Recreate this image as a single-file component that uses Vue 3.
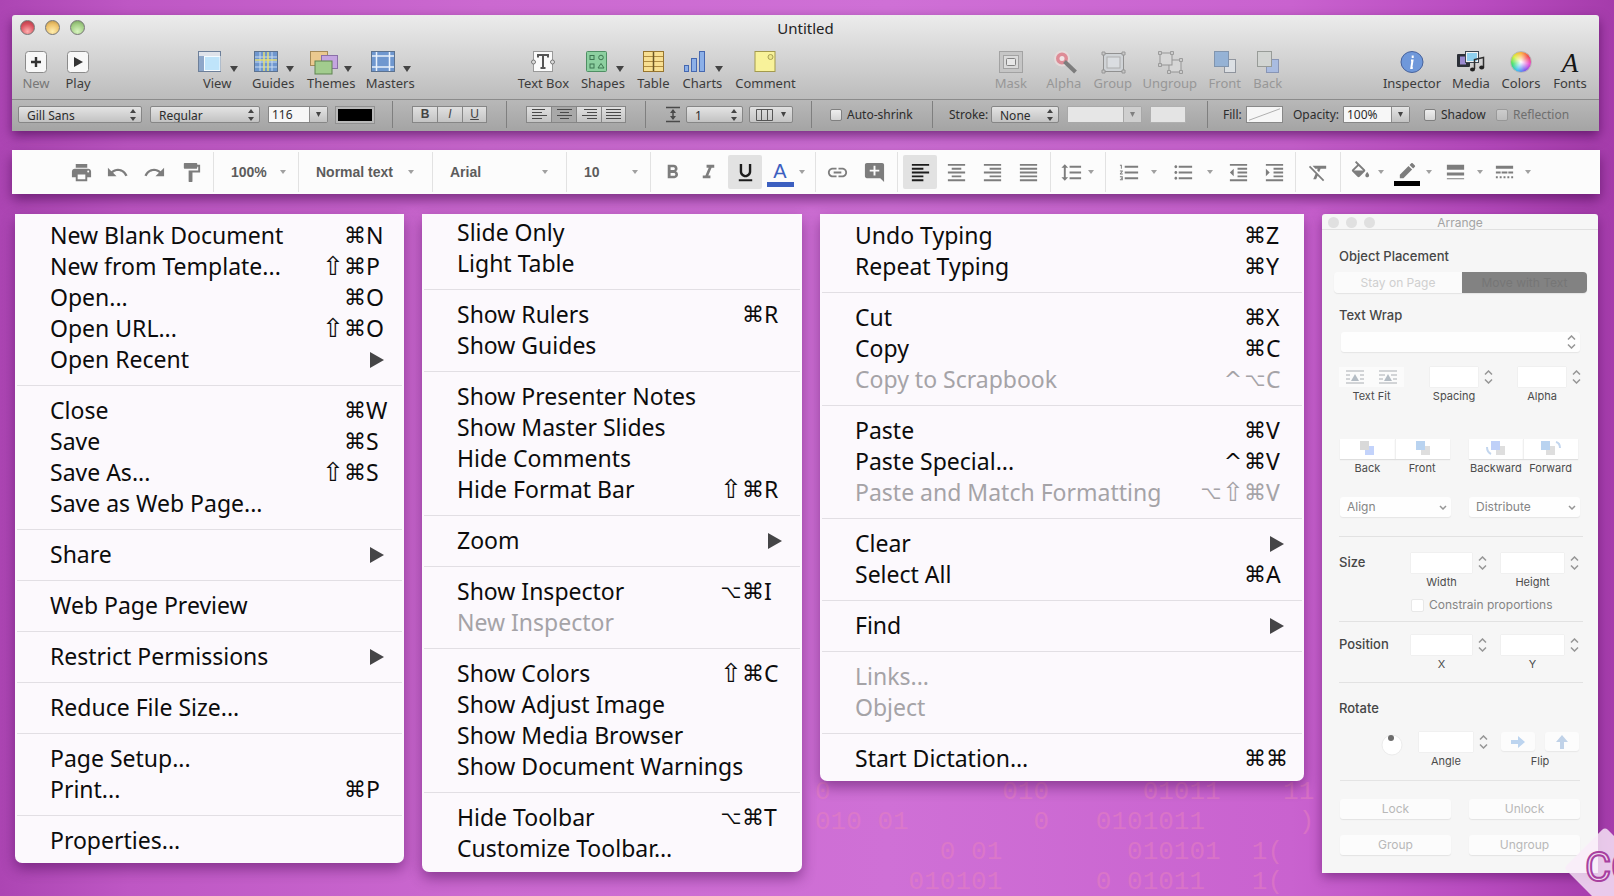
<script setup>
const toolGroups = [
  { cls: 'g-a', items: [
    { label: 'New', icon: 'plus', faded: true },
    { label: 'Play', icon: 'play' },
  ] },
  { cls: 'g-b', items: [
    { label: 'View', icon: 'view', caret: true },
    { label: 'Guides', icon: 'guides', caret: true },
    { label: 'Themes', icon: 'themes', caret: true },
    { label: 'Masters', icon: 'masters', caret: true },
  ] },
  { cls: 'g-c', items: [
    { label: 'Text Box', icon: 'textbox' },
    { label: 'Shapes', icon: 'shapes', caret: true },
    { label: 'Table', icon: 'table' },
    { label: 'Charts', icon: 'charts', caret: true },
    { label: 'Comment', icon: 'note' },
  ] },
  { cls: 'g-d', items: [
    { label: 'Mask', icon: 'mask', off: true },
    { label: 'Alpha', icon: 'alpha', off: true },
    { label: 'Group', icon: 'group', off: true },
    { label: 'Ungroup', icon: 'ungroup', off: true },
    { label: 'Front', icon: 'front', off: true },
    { label: 'Back', icon: 'back', off: true },
  ] },
  { cls: 'g-e', items: [
    { label: 'Inspector', icon: 'inspector' },
    { label: 'Media', icon: 'media' },
    { label: 'Colors', icon: 'colors' },
    { label: 'Fonts', icon: 'fonts' },
  ] },
]

const big = {
  plus: '<rect x="3.500" y="1.500" width="21" height="21" rx="3" fill="#f8f8f8" stroke="#8b8b8b"/><path d="M9 12h10M14 7v10" stroke="#333" stroke-width="2.400"/>',
  play: '<rect x="3.500" y="1.500" width="21" height="21" rx="3" fill="#f8f8f8" stroke="#8b8b8b"/><path d="M10 7l9 5-9 5z" fill="#333"/>',
  view: '<rect x="2.500" y="1.500" width="22" height="20" fill="#9fb6d4" stroke="#6d7f99"/><rect x="3" y="2" width="21" height="4" fill="#dfe3ea"/><rect x="3" y="6" width="5" height="15" fill="#8ea7c9"/><rect x="8.500" y="6.500" width="15.500" height="14" fill="#bfe4fa" stroke="#f4fbff"/>',
  guides: '<rect x="2.500" y="1.500" width="23" height="20" fill="#6f97cf" stroke="#5c728f"/><path d="M3 7h22M3 12h22M3 17h22M8 2v19M20 2v19" stroke="#c9dcf2"/><path d="M12 2v19M16 2v19M3 10h22" stroke="#e6e07a" stroke-width="1.500"/>',
  themes: '<rect x=".5" y="1.500" width="17" height="14" fill="#ebc98f" stroke="#a58a58"/><rect x="11.500" y="5.500" width="16" height="13" fill="#c4a5e0" stroke="#8a70a8"/><rect x="5" y="11" width="17" height="13" fill="#a2cc8e" stroke="#5e8350"/>',
  masters: '<rect x="2.500" y="1.500" width="23" height="20" fill="#6f97cf" stroke="#5c728f"/><path d="M7.500 2v19M20.500 2v19M3 6h22M3 17h22" stroke="#eaf2fc" stroke-width="1.500"/>',
  textbox: '<rect x="4.500" y="1.500" width="19" height="20" fill="#fafafa" stroke="#999"/><circle cx="4.500" cy="12" r="2" fill="#ddd" stroke="#777"/><circle cx="23.500" cy="12" r="2" fill="#ddd" stroke="#777"/><path d="M9 7.500V5h10v2.500M14 5v13M11.500 18h5" fill="none" stroke="#555" stroke-width="2"/>',
  shapes: '<rect x="4.500" y="1.500" width="20" height="20" rx="1" fill="#8dd0a0" stroke="#4f8f64"/><rect x="8" y="5.500" width="4" height="4" fill="none" stroke="#3d7550"/><circle cx="19" cy="7.500" r="2.300" fill="none" stroke="#3d7550"/><rect x="8" y="14" width="4" height="4" fill="none" stroke="#3d7550"/><path d="M16 18l3-4.500 3 4.500z" fill="none" stroke="#3d7550"/>',
  table: '<rect x="4.500" y="1.500" width="20" height="20" fill="#f8df92" stroke="#97752f"/><path d="M5 6.500h19M5 11.500h19M5 16.500h19" stroke="#b08c42"/><path d="M14.500 2v19" stroke="#6b5526" stroke-width="1.500"/>',
  charts: '<rect x="3.500" y="15.500" width="4" height="6" fill="#8cb0e8" stroke="#4668b0"/><rect x="10.500" y="8.500" width="5" height="13" fill="#8cb0e8" stroke="#4668b0"/><rect x="18.500" y="1.500" width="5" height="20" fill="#8cb0e8" stroke="#4668b0"/>',
  note: '<rect x="4" y="1.500" width="20" height="20" fill="#f8f29a" stroke="#a39a4d"/><circle cx="19.500" cy="7" r="2.500" fill="#eee88a" stroke="#a8a054"/>',
  mask: '<rect x="2.500" y="1.500" width="23" height="21" fill="#c4c4c4" stroke="#9b9b9b"/><rect x="6.500" y="5.500" width="15" height="13" fill="#ddd" stroke="#9b9b9b"/><rect x="9.500" y="8.500" width="9" height="7" rx="1" fill="#ececec" stroke="#757575"/>',
  alpha: '<circle cx="12" cy="8.500" r="7" fill="#e07f8c" stroke="#e8dcdc" stroke-width="2"/><circle cx="12" cy="8.500" r="2.500" fill="#f7e6e8"/><path d="M14.500 11.500l11 10.500" stroke="#6f6f6f" stroke-width="4"/>',
  group: '<rect x="4.500" y="3.500" width="20" height="18" fill="#d0d4d8" stroke="#868686"/><rect x="8" y="7" width="13" height="11" fill="#dce0e4" stroke="#a8a8a8"/><path d="M3 2h3v3H3zM23 2h3v3h-3zM3 20h3v3H3zM23 20h3v3h-3z" fill="#c8c8c8" stroke="#8e8e8e"/>',
  ungroup: '<rect x="13" y="10" width="12" height="12" fill="#d8d8d8" stroke="#8b8b8b"/><rect x="4" y="3" width="12" height="12" fill="#d8d8d8" stroke="#8b8b8b"/><path d="M2.500 1.500h3v3h-3zM14.500 1.500h3v3h-3zM2.500 13.500h3v3h-3zM23.500 8.500h3v3h-3zM11.500 20.500h3v3h-3zM23.500 20.500h3v3h-3z" fill="#ccc" stroke="#939393"/>',
  front: '<rect x="13.500" y="9.500" width="11" height="13" fill="#dfe3e8" stroke="#858b95"/><rect x="3.500" y="1.500" width="14" height="15" fill="#8badd6" stroke="#738aa8"/>',
  back: '<rect x="12.500" y="9.500" width="12" height="13" fill="#a3b9e4" stroke="#7d8cb2"/><rect x="3.500" y="1.500" width="14" height="15" fill="#d2d5d2" stroke="#8e928e"/>',
  inspector: '<ellipse cx="14" cy="12" rx="11" ry="10.500" fill="#6f98da" stroke="#48639c"/><path d="M14.700 5.500v2.500M13 10.500h1.500l-1.200 7.500h1.500" fill="none" stroke="#fff" stroke-width="2"/>',
  media: '<rect x="0" y="4" width="13" height="13" rx="1" fill="#2c3038"/><rect x="3" y="6.500" width="6" height="8" fill="#9a8ad0"/><rect x="8.500" y="1.500" width="13" height="11" fill="#8fd0ee" stroke="#3c4650"/><rect x="9.500" y="2.500" width="11" height="9" fill="none" stroke="#f2f2f2"/><path d="M17.500 19V9.500l9-2V17" fill="none" stroke="#303030" stroke-width="1.500"/><ellipse cx="15.500" cy="19.500" rx="2.500" ry="2" fill="#222"/><ellipse cx="24.700" cy="17.500" rx="2.500" ry="2" fill="#222"/>',
  fonts: '<text x="14" y="22" text-anchor="middle" font-family="Liberation Serif, serif" font-style="italic" font-size="27" fill="#161616">A</text>',
}

const mat = {
  print: 'M19 8H5c-1.660 0-3 1.340-3 3v6h4v4h12v-4h4v-6c0-1.660-1.340-3-3-3zm-3 11H8v-5h8v5zm3-7c-.55 0-1-.45-1-1s.45-1 1-1 1 .45 1 1-.45 1-1 1zm-1-9H6v4h12V3z',
  undo: 'M12.500 8c-2.650 0-5.050.99-6.900 2.600L2 7v9h9l-3.620-3.620c1.390-1.160 3.160-1.880 5.120-1.880 3.540 0 6.550 2.310 7.600 5.500l2.370-.78C21.080 11.030 17.150 8 12.500 8z',
  redo: 'M18.400 10.600C16.550 8.990 14.150 8 11.500 8c-4.650 0-8.580 3.030-9.960 7.220L3.900 16c1.050-3.190 4.050-5.500 7.600-5.500 1.950 0 3.730.72 5.120 1.880L13 16h9V7l-3.600 3.600z',
  paint: 'M18 4V3c0-.55-.45-1-1-1H5c-.55 0-1 .45-1 1v4c0 .55.45 1 1 1h12c.55 0 1-.45 1-1V6h1v4H9v11c0 .55.45 1 1 1h2c.55 0 1-.45 1-1v-9h8V4h-3z',
  bold: 'M15.600 10.790c.97-.67 1.650-1.770 1.650-2.790 0-2.260-1.750-4-4-4H7v14h7.040c2.090 0 3.710-1.700 3.710-3.790 0-1.520-.86-2.820-2.150-3.420zM10 6.500h3c.83 0 1.500.67 1.500 1.500s-.67 1.500-1.500 1.500h-3v-3zm3.500 9H10v-3h3.500c.83 0 1.500.67 1.500 1.500s-.67 1.500-1.500 1.500z',
  italic: 'M10 4v3h2.210l-3.420 8H6v3h8v-3h-2.210l3.420-8H18V4z',
  underline: 'M12 17c3.310 0 6-2.690 6-6V3h-2.500v8c0 1.930-1.570 3.500-3.500 3.500S8.500 12.930 8.500 11V3H6v8c0 3.310 2.690 6 6 6zm-7 2v2h14v-2H5z',
  link: 'M3.900 12c0-1.710 1.390-3.100 3.100-3.100h4V7H7c-2.760 0-5 2.240-5 5s2.240 5 5 5h4v-1.900H7c-1.710 0-3.100-1.390-3.100-3.100zM8 13h8v-2H8v2zm9-6h-4v1.900h4c1.710 0 3.100 1.390 3.100 3.100s-1.390 3.100-3.100 3.100h-4V17h4c2.760 0 5-2.240 5-5s-2.240-5-5-5z',
  comment: 'M21.990 4c0-1.100-.89-2-1.990-2H4c-1.100 0-2 .9-2 2v12c0 1.100.9 2 2 2h14l4 4-.01-18zM17 11h-4v4h-2v-4H7V9h4V5h2v4h4v2z',
  left: 'M15 15H3v2h12v-2zm0-8H3v2h12V7zM3 13h18v-2H3v2zm0 8h12v-2H3v2zM3 3v2h18V3H3z',
  center: 'M7 15v2h10v-2H7zm-4 6h18v-2H3v2zm0-8h18v-2H3v2zm4-6v2h10V7H7zM3 3v2h18V3H3z',
  right: 'M3 21h18v-2H3v2zm6-4h12v-2H9v2zm-6-4h18v-2H3v2zm6-4h12V7H9v2zM3 3v2h18V3H3z',
  justify: 'M3 21h18v-2H3v2zm0-4h18v-2H3v2zm0-4h18v-2H3v2zm0-4h18V7H3v2zm0-6v2h18V3H3z',
  spacing: 'M6 7h2.500L5 3.500 1.500 7H4v10H1.500L5 20.500 8.500 17H6V7zm4-2v2h12V5H10zm0 14h12v-2H10v2zm0-6h12v-2H10v2z',
  numbers: 'M2 17h2v.5H3v1h1v.5H2v1h3v-4H2v1zm1-9h1V4H2v1h1v3zm-1 3h1.800L2 13.100v.9h3v-1H3.200L5 10.900V10H2v1zm5-6v2h14V5H7zm0 14h14v-2H7v2zm0-6h14v-2H7v2z',
  bullets: 'M4 10.500c-.83 0-1.500.67-1.500 1.500s.67 1.500 1.500 1.500 1.500-.67 1.500-1.500-.67-1.500-1.500-1.500zm0-6c-.83 0-1.500.67-1.500 1.500S3.170 7.500 4 7.500 5.500 6.830 5.500 6 4.830 4.500 4 4.500zm0 12c-.83 0-1.500.68-1.500 1.500s.68 1.500 1.500 1.500 1.500-.68 1.500-1.500-.67-1.500-1.500-1.500zM7 19h14v-2H7v2zm0-6h14v-2H7v2zm0-8v2h14V5H7z',
  outdent: 'M11 17h10v-2H11v2zm-8-5l4 4V8l-4 4zm0 9h18v-2H3v2zM3 3v2h18V3H3zm8 6h10V7H11v2zm0 4h10v-2H11v2z',
  indent: 'M3 21h18v-2H3v2zM3 8v8l4-4-4-4zm8 9h10v-2H11v2zM3 3v2h18V3H3zm8 6h10V7H11v2zm0 4h10v-2H11v2z',
  clear: 'M3.270 5L2 6.270l6.970 6.970L6.500 19h3l1.570-3.660L16.730 21 18 19.730 3.550 5.270 3.270 5zM6 5v.18L8.820 8h2.400l-.72 1.680 2.100 2.100L14.210 8H20V5H6z',
  fill: 'M16.560 8.940L7.620 0 6.210 1.410l2.380 2.380-5.150 5.150c-.59.59-.59 1.540 0 2.120l5.500 5.500c.29.29.68.44 1.060.44s.77-.15 1.060-.44l5.500-5.500c.59-.58.59-1.530 0-2.120zM5.210 10L10 5.210 14.790 10H5.210zM19 11.500s-2 2.170-2 3.500c0 1.100.9 2 2 2s2-.9 2-2c0-1.330-2-3.500-2-3.500z',
  pen: 'M4 14.250V18h3.750L16.810 8.940l-3.750-3.750L4 14.250zM19.710 6.040c.39-.39.39-1.020 0-1.410l-2.340-2.340c-.39-.39-1.020-.39-1.410 0l-1.830 1.830 3.750 3.750 1.830-1.830z',
  weight: 'M3 4h18v5H3zM3 12h18v3H3zM3 18h18v1H3z',
  dash: 'M3 5h18v3H3zM3 11h5v2H3zM9 11h6v2H9zM16 11h5v2h-5zM3 16h2v2H3zM7 16h2v2H7zM11 16h2v2h-2zM15 16h2v2h-2zM19 16h2v2h-2z',
}

const docSections = [
  { cls: 's1', items: [{ i: 'print' }, { i: 'undo' }, { i: 'redo' }, { i: 'paint' }] },
  { cls: 's2', items: [{ t: '100%' }] },
  { cls: 's3', items: [{ t: 'Normal text' }] },
  { cls: 's4', items: [{ t: 'Arial' }] },
  { cls: 's5', items: [{ t: '10' }] },
  { cls: 's6', items: [{ i: 'bold' }, { i: 'italic' }, { i: 'underline', on: true }, { letter: 'A' }, { c: true }] },
  { cls: 's7', items: [{ i: 'link' }, { i: 'comment' }] },
  { cls: 's8', items: [{ i: 'left', on: true }, { i: 'center' }, { i: 'right' }, { i: 'justify' }] },
  { cls: 's9', items: [{ i: 'spacing' }, { c: true }] },
  { cls: 's10', items: [{ i: 'numbers' }, { c: true }, { i: 'bullets' }, { c: true }, { i: 'outdent' }, { i: 'indent' }] },
  { cls: 's11', items: [{ i: 'clear' }] },
  { cls: 's12', items: [{ i: 'fill' }, { c: true }, { i: 'pen', bar: true }, { c: true }, { i: 'weight' }, { c: true }, { i: 'dash' }, { c: true }] },
]

const m = (label, mods, key, off) => ({ label, mods: mods ? [...mods] : [], key, off })
const sub = (label) => ({ label, mods: [], sub: true })
const modClass = { '⌥': 'opt', '⇧': 'shift' }

const menus = [
  { cls: 'file', groups: [
    [m('New Blank Document', '⌘', 'N'), m('New from Template...', '⇧⌘', 'P'), m('Open...', '⌘', 'O'), m('Open URL...', '⇧⌘', 'O'), sub('Open Recent')],
    [m('Close', '⌘', 'W'), m('Save', '⌘', 'S'), m('Save As...', '⇧⌘', 'S'), m('Save as Web Page...')],
    [sub('Share')],
    [m('Web Page Preview')],
    [sub('Restrict Permissions')],
    [m('Reduce File Size...')],
    [m('Page Setup...'), m('Print...', '⌘', 'P')],
    [m('Properties...')],
  ] },
  { cls: 'view', groups: [
    [m('Slide Only'), m('Light Table')],
    [m('Show Rulers', '⌘', 'R'), m('Show Guides')],
    [m('Show Presenter Notes'), m('Show Master Slides'), m('Hide Comments'), m('Hide Format Bar', '⇧⌘', 'R')],
    [sub('Zoom')],
    [m('Show Inspector', '⌥⌘', 'I'), m('New Inspector', '', '', true)],
    [m('Show Colors', '⇧⌘', 'C'), m('Show Adjust Image'), m('Show Media Browser'), m('Show Document Warnings')],
    [m('Hide Toolbar', '⌥⌘', 'T'), m('Customize Toolbar…')],
  ] },
  { cls: 'edit', groups: [
    [m('Undo Typing', '⌘', 'Z'), m('Repeat Typing', '⌘', 'Y')],
    [m('Cut', '⌘', 'X'), m('Copy', '⌘', 'C'), m('Copy to Scrapbook', '^⌥', 'C', true)],
    [m('Paste', '⌘', 'V'), m('Paste Special...', '^⌘', 'V'), m('Paste and Match Formatting', '⌥⇧⌘', 'V', true)],
    [sub('Clear'), m('Select All', '⌘', 'A')],
    [sub('Find')],
    [m('Links...', '', '', true), m('Object', '', '', true)],
    [m('Start Dictation…', '⌘', '⌘')],
  ] },
]

const digits = [
  '0           010      01011    11',
  '010 01        0   0101011      )',
  '        0 01        010101  1(',
  '      010101      0 01011   1(',
].join('\n')
</script>

<template>
  <div class="page">
    <pre class="digits" aria-hidden="true">{{ digits }}</pre>

    <header class="window">
      <div class="titlebar">
        <div class="lights"><i class="red"></i><i class="amber"></i><i class="green"></i></div>
        <h1>Untitled</h1>
      </div>
      <div class="tools">
        <template v-for="(g, gi) in toolGroups" :key="g.cls">
          <div v-if="gi" class="spacer" :class="'sp' + gi"></div>
          <div class="group" :class="g.cls">
            <button v-for="t in g.items" :key="t.label" type="button" class="tool" :class="{ off: t.off, faded: t.faded }">
              <span class="pic">
                <i v-if="t.icon === 'colors'" class="wheel"></i>
                <svg v-else width="28" height="25" viewBox="0 0 28 25" v-html="big[t.icon]"></svg>
                <svg v-if="t.caret" class="tcaret" width="8" height="6" viewBox="0 0 8 6"><path d="M0 0h8L4 6z" fill="#444" /></svg>
              </span>
              <span>{{ t.label }}</span>
            </button>
          </div>
        </template>
      </div>

      <div class="format">
        <div class="fsec f1">
          <label class="sel"><select aria-label="Font"><option>Gill Sans</option></select><svg width="6" height="12" viewBox="0 0 6 12"><path d="M0 4l3-4 3 4zM0 8l3 4 3-4z" /></svg></label>
          <label class="sel"><select aria-label="Style"><option>Regular</option></select><svg width="6" height="12" viewBox="0 0 6 12"><path d="M0 4l3-4 3 4zM0 8l3 4 3-4z" /></svg></label>
          <div class="combo"><input aria-label="Size" value="116" /><button type="button" aria-label="Sizes"><svg width="5" height="5" viewBox="0 0 5 5"><path d="M0 0h5L2.500 5z" /></svg></button></div>
          <button type="button" class="swatch black" aria-label="Text color"></button>
        </div>
        <div class="fsec f2">
          <div class="seg"><button type="button"><b>B</b></button><button type="button"><em>I</em></button><button type="button"><u>U</u></button></div>
        </div>
        <div class="fsec f3">
          <div class="seg">
            <button type="button" aria-label="Left"><svg width="15" height="13" viewBox="0 0 15 13"><path d="M0 1.500h13M0 4.500h10M0 7.500h15M0 10.500h10" /></svg></button>
            <button type="button" aria-label="Center" class="down"><svg width="15" height="13" viewBox="0 0 15 13"><path d="M0 1.500h15M3 4.500h9M0 7.500h15M3 10.500h9" /></svg></button>
            <button type="button" aria-label="Right"><svg width="15" height="13" viewBox="0 0 15 13"><path d="M2 1.500h13M5 4.500h10M0 7.500h15M5 10.500h10" /></svg></button>
            <button type="button" aria-label="Justify"><svg width="15" height="13" viewBox="0 0 15 13"><path d="M0 1.500h15M0 4.500h15M0 7.500h15M0 10.500h15" /></svg></button>
          </div>
        </div>
        <div class="fsec f4">
          <svg width="14" height="17" viewBox="0 0 14 17"><path d="M0 1.500h14M0 15.500h14M7 4v9" stroke="#4a4a4a" stroke-width="1.500" /><path d="M4 7l3-4 3 4zM4 10l3 4 3-4z" fill="#4a4a4a" /></svg>
          <label class="sel"><select aria-label="Line spacing"><option>1</option></select><svg width="6" height="12" viewBox="0 0 6 12"><path d="M0 4l3-4 3 4zM0 8l3 4 3-4z" /></svg></label>
          <button type="button" class="cols" aria-label="Columns"><svg width="17" height="12" viewBox="0 0 17 12"><path d="M.5.5h16v11H.5zM5.500.5v11M11.500.5v11" fill="none" stroke="#555" /></svg><svg width="5" height="5" viewBox="0 0 5 5"><path d="M0 0h5L2.500 5z" fill="#444" /></svg></button>
        </div>
        <div class="fsec f5"><label class="check"><input type="checkbox" />Auto-shrink</label></div>
        <div class="fsec f6">
          <span>Stroke:</span>
          <label class="sel"><select aria-label="Stroke"><option>None</option></select><svg width="6" height="12" viewBox="0 0 6 12"><path d="M0 4l3-4 3 4zM0 8l3 4 3-4z" /></svg></label>
          <div class="combo dim"><input aria-label="Stroke width" disabled /><button type="button" disabled aria-label="Widths"><svg width="5" height="5" viewBox="0 0 5 5"><path d="M0 0h5L2.500 5z" /></svg></button></div>
          <button type="button" class="swatch pale" disabled aria-label="Stroke color"></button>
        </div>
        <div class="fsec f7">
          <span>Fill:</span>
          <button type="button" class="swatch none" aria-label="Fill color"><svg viewBox="0 0 36 17" preserveAspectRatio="none"><path d="M2 15L34 2" stroke="#aaa" /></svg></button>
          <span class="opacity">Opacity:</span>
          <div class="combo"><input aria-label="Opacity" value="100%" /><button type="button" aria-label="Opacities"><svg width="5" height="5" viewBox="0 0 5 5"><path d="M0 0h5L2.500 5z" /></svg></button></div>
          <label class="check shadow"><input type="checkbox" />Shadow</label>
          <label class="check dim"><input type="checkbox" disabled />Reflection</label>
        </div>
      </div>
    </header>

    <nav class="docbar">
      <div v-for="s in docSections" :key="s.cls" class="dsec" :class="s.cls">
        <template v-for="(it, n) in s.items" :key="n">
          <button v-if="it.t" type="button" class="drop"><span>{{ it.t }}</span><i class="caret"></i></button>
          <button v-else-if="it.letter" type="button" class="ib"><span class="letter">{{ it.letter }}</span></button>
          <i v-else-if="it.c" class="caret"></i>
          <button v-else type="button" class="ib" :class="{ on: it.on, bar: it.bar }" :aria-label="it.i"><svg width="23" height="23" viewBox="0 0 24 24"><path :d="mat[it.i]" /></svg></button>
        </template>
      </div>
    </nav>

    <main class="board">
      <div v-for="menu in menus" :key="menu.cls" class="menu" :class="menu.cls">
        <ul v-for="(g, n) in menu.groups" :key="n">
          <li v-for="it in g" :key="it.label">
            <button type="button" :disabled="it.off">
              <span class="name">{{ it.label }}</span>
              <kbd v-for="(k, ki) in it.mods" :key="ki" class="mod" :class="modClass[k]">{{ k }}</kbd>
              <kbd v-if="it.key" class="key" :class="{ sym: it.key === '⌘' }">{{ it.key }}</kbd>
              <svg v-if="it.sub" class="arrow" width="14" height="16" viewBox="0 0 14 16"><path d="M0 0l14 8-14 8z" /></svg>
            </button>
          </li>
        </ul>
      </div>

      <section class="panel">
        <div class="phead"><div class="dots"><i></i><i></i><i></i></div><h2>Arrange</h2></div>
        <div class="pbody">
          <h3>Object Placement</h3>
          <div class="place"><button type="button">Stay on Page</button><button type="button" class="dark">Move with Text</button></div>
          <h3 class="wrap-h">Text Wrap</h3>
          <label class="psel wide"><select aria-label="Text Wrap"><option></option></select><svg width="9" height="14" viewBox="0 0 9 14"><path d="M1 4.500L4.500 1 8 4.500M1 9.500L4.500 13 8 9.500" /></svg></label>

          <div class="fit">
            <div class="cell">
              <div class="duo flat">
                <button type="button" aria-label="Fit around"><svg width="18" height="15" viewBox="0 0 18 15"><path d="M0 1h18M0 5h4M14 5h4M0 9h4M14 9h4M0 13h18" stroke="#a9adb2" /><path d="M5 11l4-7 4 7z" fill="#b4bcc4" /></svg></button>
                <button type="button" aria-label="Fit tight"><svg width="18" height="15" viewBox="0 0 18 15"><path d="M0 1h18M0 5h6M12 5h6M0 9h4M14 9h4M0 13h18" stroke="#a9adb2" /><path d="M5 11l4-7 4 7z" fill="#b4bcc4" /></svg></button>
              </div><span>Text Fit</span>
            </div>
            <label class="cell"><input type="text" /><span>Spacing</span></label>
            <svg class="step" width="9" height="14" viewBox="0 0 9 14"><path d="M1 4.500L4.500 1 8 4.500M1 9.500L4.500 13 8 9.500" /></svg>
            <label class="cell"><input type="text" /><span>Alpha</span></label>
            <svg class="step" width="9" height="14" viewBox="0 0 9 14"><path d="M1 4.500L4.500 1 8 4.500M1 9.500L4.500 13 8 9.500" /></svg>
          </div>

          <div class="order">
            <div class="duo">
              <button type="button" aria-label="Back"><svg width="16" height="14" viewBox="0 0 16 14"><path d="M6 5h9v9H6z" fill="#c3d3fb" /><path d="M1 0h9v9H1z" fill="#d9d9d9" /></svg></button>
              <button type="button" aria-label="Front"><svg width="16" height="14" viewBox="0 0 16 14"><path d="M6 5h9v9H6z" fill="#dedede" /><path d="M1 0h9v9H1z" fill="#b9d3f0" /></svg></button>
              <span>Back</span><span>Front</span>
            </div>
            <div class="duo">
              <button type="button" aria-label="Backward"><svg width="20" height="14" viewBox="0 0 20 14"><path d="M10 5h9v9h-9z" fill="#dedede" /><path d="M5 0h9v9H5z" fill="#bfd0f8" /><path d="M1 6q0 5 4 7" fill="none" stroke="#c3d6ee" stroke-width="2" /></svg></button>
              <button type="button" aria-label="Forward"><svg width="20" height="14" viewBox="0 0 20 14"><path d="M5 5h9v9H5z" fill="#dedede" /><path d="M0 0h9v9H0z" fill="#b9d3f0" /><path d="M15 1q4 1 4 6" fill="none" stroke="#c3d6ee" stroke-width="2" /></svg></button>
              <span>Backward</span><span>Forward</span>
            </div>
          </div>

          <div class="pair picks">
            <label class="psel"><select aria-label="Align"><option>Align</option></select><svg width="8" height="5" viewBox="0 0 8 5"><path d="M1 1l3 3 3-3" /></svg></label>
            <label class="psel"><select aria-label="Distribute"><option>Distribute</option></select><svg width="8" height="5" viewBox="0 0 8 5"><path d="M1 1l3 3 3-3" /></svg></label>
          </div>

          <div class="block size">
            <h3>Size</h3>
            <label class="cell"><input type="text" /><span>Width</span></label>
            <svg class="step" width="9" height="14" viewBox="0 0 9 14"><path d="M1 4.500L4.500 1 8 4.500M1 9.500L4.500 13 8 9.500" /></svg>
            <label class="cell"><input type="text" /><span>Height</span></label>
            <svg class="step" width="9" height="14" viewBox="0 0 9 14"><path d="M1 4.500L4.500 1 8 4.500M1 9.500L4.500 13 8 9.500" /></svg>
            <label class="keep"><input type="checkbox" />Constrain proportions</label>
          </div>

          <div class="block pos">
            <h3>Position</h3>
            <label class="cell"><input type="text" /><span>X</span></label>
            <svg class="step" width="9" height="14" viewBox="0 0 9 14"><path d="M1 4.500L4.500 1 8 4.500M1 9.500L4.500 13 8 9.500" /></svg>
            <label class="cell"><input type="text" /><span>Y</span></label>
            <svg class="step" width="9" height="14" viewBox="0 0 9 14"><path d="M1 4.500L4.500 1 8 4.500M1 9.500L4.500 13 8 9.500" /></svg>
          </div>

          <div class="rot">
            <h3>Rotate</h3>
            <div class="rotrow">
              <svg class="dial" width="22" height="24" viewBox="0 0 22 24"><circle cx="11" cy="13" r="10" fill="#fff" stroke="#ececec" /><circle cx="10" cy="6" r="3" fill="#6c6c6c" /></svg>
              <label class="cell"><input type="text" /><span>Angle</span></label>
              <svg class="step" width="9" height="14" viewBox="0 0 9 14"><path d="M1 4.500L4.500 1 8 4.500M1 9.500L4.500 13 8 9.500" /></svg>
              <div class="flip">
                <button type="button" aria-label="Flip horizontally"><svg width="14" height="12" viewBox="0 0 14 12"><path d="M0 4h7V0l7 6-7 6V8H0z" fill="#bcd4ef" /></svg></button>
                <button type="button" aria-label="Flip vertically"><svg width="12" height="14" viewBox="0 0 12 14"><path d="M4 14V7H0l6-7 6 7H8v7z" fill="#c0d2e8" /></svg></button>
                <span>Flip</span>
              </div>
            </div>
          </div>

          <div class="pair acts">
            <button type="button" disabled>Lock</button><button type="button" disabled>Unlock</button>
            <button type="button" disabled>Group</button><button type="button" disabled>Ungroup</button>
          </div>
        </div>
      </section>
    </main>

    <div class="mark" aria-hidden="true"><i></i><span>CC</span></div>
  </div>
</template>

<style>
body { margin: 0; }
</style>

<style scoped>
* { box-sizing: border-box; }
button, input, select { font: inherit; color: inherit; margin: 0; padding: 0; border: 0; background: none; border-radius: 0; }
select { appearance: none; }
h1, h2, h3, ul, pre { margin: 0; padding: 0; font-weight: 400; }
svg { display: block; flex: none; }

.page {
  position: relative; overflow: hidden; min-height: 100vh; padding: 15px 14px 24px 12px;
  display: flex; flex-direction: column;
  background: linear-gradient(90deg, #ac45b3 0, #be57c4 8%, #cb69d0 30%, #cf70d6 55%, #c962cf 80%, #b84bbf 92%, #a53cab 100%);
  font-family: "Noto Sans", "Open Sans", sans-serif;
}
.digits { position: absolute; left: 815px; bottom: 0; font: 26px/30px "Liberation Mono", monospace; color: rgba(232, 130, 190, .5); }

.window { position: relative; border-radius: 3px 3px 0 0; box-shadow: 0 5px 12px rgba(60, 0, 70, .6); background: linear-gradient(#ececec 0, #bcbcbc 84px); margin-right: 1px; color: #3c3c3c; }
.titlebar { position: relative; height: 30px; display: flex; align-items: center; justify-content: center; }
.titlebar h1 { font-size: 15px; line-height: 24px; color: #222; height: 28px; }
.lights { position: absolute; left: 8px; top: 5px; display: flex; gap: 10px; }
.lights i { width: 15px; height: 15px; border-radius: 50%; border: 1px solid #777; }
.red { background: radial-gradient(circle at 50% 80%, #ffb0b0, #d8505c 60%, #a83844); }
.amber { background: radial-gradient(circle at 50% 80%, #ffeeb0, #ecc069 60%, #b88d40); }
.green { background: radial-gradient(circle at 50% 80%, #d8f4c0, #a0cc82 60%, #6f9a58); }

.tools { display: flex; height: 54px; padding: 5px 7px 0 3px; }
.spacer { flex: 1 1 0; }
.sp1 { flex-grow: 90; } .sp2 { flex-grow: 93; } .sp3 { flex-grow: 184; } .sp4 { flex-grow: 84; }
.group { display: grid; }
.g-a { grid-template-columns: 42px 42px; }
.g-b { grid-template-columns: 56px 56px 60px 58px; }
.g-c { grid-template-columns: 62px 57px 44px 54px 72px; }
.g-d { grid-template-columns: 50px 56px 42px 72px 38px 48px; }
.g-e { grid-template-columns: 72px 46px 54px 44px; }
.tool { display: flex; flex-direction: column; align-items: center; font-size: 13px; line-height: 17px; white-space: nowrap; }
.tool.off { color: #979797; }
.tool.off svg { opacity: .85; }
.tool.faded { color: #777; }
.pic { display: flex; align-items: flex-end; height: 25px; gap: 6px; }
.pic .tcaret { margin-bottom: 3px; }
.wheel { width: 22px; height: 22px; margin-bottom: 2px; border-radius: 50%; border: 1px solid #b8b8b8; background: radial-gradient(#fff, rgba(255, 255, 255, 0) 65%), conic-gradient(#ffb03a, #f24a4a, #ea4ad0, #7a5af0, #3fc3f0, #3ee06a, #d8ee3a, #ffb03a); }

.format { display: flex; height: 32px; border-top: 1px solid #8b8b8b; background: linear-gradient(#b8b8b8, #a4a4a4); font-size: 12px; line-height: 17px; color: #2c2c2c; }
.fsec { display: grid; align-items: center; align-content: center; border-right: 1px solid #7f7f7f; margin: 1px 0 3px; white-space: nowrap; }
.f1 { grid-template-columns: 124px 110px 60px 38px; gap: 8px; padding: 0 18px 0 6px; }
.f2, .f3 { padding: 0 19px; }
.f4 { grid-template-columns: 14px 57px 44px; gap: 6px; padding: 0 18px 0 20px; }
.f5 { padding: 0 18px; width: 121px; }
.f6 { grid-template-columns: 34px 68px 75px 36px; gap: 8px; padding: 0 21px 0 16px; }
.f7 { grid-template-columns: 18px 37px 50px 67px 71px auto; column-gap: 5px; padding-left: 15px; border: 0; }
.opacity { padding-left: 5px; }
.shadow { margin-left: 9px; }
.f7 .dim { margin-left: 5px; }
.sel { position: relative; display: block; height: 17px; }
.sel select { width: 100%; height: 17px; padding: 0 8px; border: 1px solid #868686; border-radius: 2px; background: linear-gradient(#e4e4e4, #c2c2c2); display: block; }
.sel svg { position: absolute; right: 6px; top: 3px; fill: #444; pointer-events: none; }
.combo { display: flex; height: 17px; border: 1px solid #868686; border-radius: 0 2px 2px 0; }
.combo input { flex: 1; min-width: 0; background: #f7f7f7; padding-left: 3px; }
.combo button { width: 18px; display: grid; place-items: center; border-left: 1px solid #8c8c8c; background: linear-gradient(#e4e4e4, #c2c2c2); }
.combo svg { fill: #444; }
.combo.dim { border-color: #a8a8a8; }
.combo.dim input { background: #e6e6e6; }
.combo.dim button { background: #cfcfcf; border-color: #a8a8a8; }
.combo.dim svg { fill: #808080; }
.swatch { height: 17px; border: 1px solid #888; background: #f6f6f6; }
.swatch.black { background: #000; border: 2px solid #b9b9b9; outline: 1px solid #909090; height: 16px; }
.swatch.pale { background: #e4e4e4; border-color: #b0b0b0; }
.swatch svg { width: 100%; height: 100%; }
.seg { display: grid; grid-auto-flow: column; grid-auto-columns: 25px; height: 17px; }
.seg button { display: grid; place-items: center; border: 1px solid #868686; border-right-width: 0; background: linear-gradient(#e0e0e0, #c4c4c4); line-height: 15px; color: #444; font-family: "Liberation Sans", sans-serif; }
.seg button:last-child { border-right-width: 1px; }
.seg .down { background: #a8a8a8; }
.seg path { stroke: #4a4a4a; stroke-width: 1; }
.cols { height: 17px; display: flex; align-items: center; justify-content: center; gap: 8px; border: 1px solid #868686; border-radius: 2px; background: linear-gradient(#e0e0e0, #c4c4c4); }
.check { display: flex; align-items: center; gap: 5px; }
.check input { appearance: none; flex: none; width: 12px; height: 12px; border: 1px solid #808080; border-radius: 2px; background: linear-gradient(#eee, #d4d4d4); }
.check.dim { color: #6e6e6e; }
.check.dim input { opacity: .45; }

.docbar { position: relative; display: flex; height: 44px; margin-top: 19px; background: #fcfcfc; box-shadow: 0 6px 12px rgba(60, 0, 70, .55); }
.dsec { display: grid; align-items: center; justify-items: center; border-right: 1px solid #e2e2e2; margin: 2px 0; flex: none; }
.s1 { padding-left: 51px; width: 202px; grid-template-columns: 36px 37px 37px 37px; }
.s2 { width: 85px; } .s3 { width: 134px; } .s4 { width: 134px; } .s5 { width: 84px; }
.s6 { width: 165px; padding-left: 3px; grid-template-columns: 36px 37px 36px 34px 9px; }
.s7 { width: 82px; padding-left: 3px; grid-template-columns: 37px 37px; }
.s8 { width: 153px; padding-left: 4px; grid-template-columns: 36px 36px 36px 36px; }
.s9 { width: 55px; padding-left: 6px; grid-template-columns: 28px 12px; }
.s10 { width: 190px; padding-left: 7px; grid-template-columns: 32px 18px 40px 14px 42px 30px; }
.s11 { width: 45px; }
.s12 { padding-left: 4px; border: 0; grid-template-columns: 30px 12px 40px 4px 48px 2px 46px 2px; }
.ib { width: 34px; height: 34px; display: grid; place-items: center; }
.ib svg { fill: #7d7d7d; }
.ib.on { background: #e2e2e2; border-radius: 2px; }
.ib.on svg { fill: #1c1c1c; }
.ib.bar { position: relative; }
.ib.bar::after { content: ""; position: absolute; left: 4px; right: 4px; bottom: 3px; height: 5px; background: #000; }
.letter { width: 27px; height: 24px; margin-top: 6px; border-bottom: 5px solid #3c5fc0; color: #3c5fc0; font: 20px/17px "Liberation Sans", Arial, sans-serif; }
.drop { width: 100%; padding: 0 12px 0 17px; display: flex; align-items: center; justify-content: space-between; font: bold 14px/20px "Liberation Sans", Arial, sans-serif; color: #5c5c5c; white-space: nowrap; }
.s3 .drop, .s4 .drop { padding-right: 18px; }
.caret { border: 3px solid transparent; border-top: 4px solid #a0a0a0; border-bottom: 0; width: 6px; height: 4px; }

.board { position: relative; margin: 20px 2px 0 3px; display: grid; grid-template-columns: 389fr 380fr 484fr 276fr; gap: 18px; align-items: start; }
.menu { background: #fcf9fd; border-radius: 0 0 7px 7px; box-shadow: 0 6px 14px rgba(60, 0, 70, .45); padding: 6px 0 7px; color: #0c0c0c; font-size: 23px; line-height: 31px; }
.menu.view { padding: 3px 0 8px; }
.menu ul { list-style: none; }
.menu ul + ul { margin: 10px 2px 0; padding-top: 9px; border-top: 1px solid #e2dfe4; }
.menu ul + ul button { padding: 0 0 0 33px; }
.menu button { display: flex; align-items: center; width: 100%; height: 31px; padding: 0 2px 0 35px; text-align: left; }
.menu button:disabled { color: #a5a3a7; }
.name { flex: 1; white-space: nowrap; }
.mod { font: 22px/31px "DejaVu Sans", sans-serif; width: 22px; text-align: center; }
.mod.opt { font-size: 18px; }
.mod.shift { font-size: 26px; }
.key { width: 36px; font: inherit; }
.key.sym { font: 22px/31px "DejaVu Sans", sans-serif; }
.arrow { margin-right: 18px; fill: #454547; }

.panel { background: #f6f6f6; border-radius: 3px 3px 0 0; box-shadow: 0 4px 12px rgba(60, 0, 70, .45); font: 12px/16px Inter, sans-serif; color: #4c4c4c; padding-bottom: 18px; }
.phead { position: relative; height: 16px; border-bottom: 1px solid #e0e0e0; text-align: center; color: #a4a4a4; }
.phead h2 { font-size: 12px; line-height: 17px; }
.dots { position: absolute; left: 6px; top: 3px; display: flex; gap: 7px; }
.dots i { width: 11px; height: 11px; border-radius: 50%; background: #e0e0e0; }
.pbody { padding: 17px 15px 0 17px; }
.panel h3 { font-size: 13px; line-height: 18px; font-weight: 500; color: #464646; }
.place { display: grid; grid-template-columns: 127fr 124fr; height: 21px; margin: 7px -4px 0 -5px; color: #cfcfcf; }
.place button { background: #fbfbfb; border-radius: 4px 0 0 4px; box-shadow: 0 1px 1px #e4e4e4; }
.place .dark { background: #828282; color: #767676; border-radius: 0 4px 4px 0; }
.wrap-h { margin-top: 13px; }
.psel { position: relative; display: block; height: 20px; color: #858585; }
.psel select { display: block; width: 100%; height: 20px; padding: 0 7px; background: #fefefe; border-radius: 3px; box-shadow: 0 1px 1px #e6e6e6; }
.psel svg { position: absolute; right: 4px; top: 8px; }
.psel.wide { margin: 8px 3px 0 2px; }
.psel.wide svg { top: 3px; }
.panel .step path, .psel path { fill: none; stroke: #969696; stroke-width: 1.500; }
.cell { display: flex; flex-direction: column; align-items: center; gap: 1px; font-size: 11px; }
.cell > input { width: 100%; height: 20px; background: #fff; box-shadow: 0 0 1px #d4d4d4; }
.step { margin: 3px 0 0 6px; }
.fit { display: grid; grid-template-columns: 65fr 26fr 48fr 22fr 18fr 48fr 17fr; margin-top: 15px; }
.fit .cell:nth-child(2) { grid-column: 3; }
.fit .cell:nth-child(4) { grid-column: 6; }
.duo { display: grid; grid-template-columns: 1fr 1fr; text-align: center; row-gap: 1px; font-size: 11px; }
.duo button { height: 20px; display: grid; justify-items: center; align-content: start; padding-top: 2px; background: #fff; box-shadow: 0 1px 1px #dedede; }
.duo button + button { border-left: 1px solid #efefef; }
.duo.flat { width: 100%; }
.duo.flat button { border: 0; align-content: center; padding: 0; background: #fbfbfb; box-shadow: none; }
.order { display: grid; grid-template-columns: 1fr 1fr; gap: 19px; margin: 35px 5px 0 1px; }
.pair { display: grid; grid-template-columns: 1fr 1fr; gap: 16px 18px; margin: 21px 3px 0 1px; }
.block { display: grid; grid-template-columns: 72fr 61fr 29fr 63fr 19fr; border-top: 1px solid #e2e2e2; margin-top: 19px; padding-top: 16px; }
.keep { grid-column: 2 / -1; display: flex; align-items: center; gap: 5px; color: #858585; white-space: nowrap; margin-top: 7px; }
.keep input { appearance: none; width: 13px; height: 13px; background: #fff; border: 1px solid #e8e8e8; border-radius: 2px; }
.block.pos { margin-top: 8px; padding-top: 13px; }
.rot { border-top: 1px solid #e2e2e2; margin-top: 10px; padding-top: 16px; }
.rotrow { display: grid; grid-template-columns: 26fr 54fr 54fr 28fr 78fr 4fr; margin-top: 15px; }
.dial { grid-column: 2; margin-left: 16px; }
.rotrow .step { margin-left: 6px; }
.flip { display: grid; grid-template-columns: 34px 34px; justify-content: space-between; row-gap: 2px; text-align: center; font-size: 11px; }
.flip button { height: 19px; display: grid; place-items: center; background: #fcfcfc; border-radius: 3px; box-shadow: 0 1px 1px #e8e8e8; }
.flip span { grid-column: 1 / -1; }
.acts { margin-top: 11px; padding-top: 18px; border-top: 1px solid #e4e4e4; }
.acts button { height: 20px; background: #fcfcfc; border-radius: 3px; box-shadow: 0 1px 1px #e4e4e4; color: #b8b8b8; }

.mark { position: absolute; right: 0; bottom: 0; width: 50px; height: 70px; overflow: hidden; }
.mark i { position: absolute; left: 12px; top: 12px; width: 58px; height: 58px; border-radius: 4px; background: rgba(250, 236, 250, .8); transform: rotate(45deg); }
.mark span { position: absolute; left: 21px; top: 21px; font: 40px/40px Roboto, sans-serif; color: #f2dcf2; -webkit-text-stroke: 2px #a8409f; white-space: nowrap; }
</style>
